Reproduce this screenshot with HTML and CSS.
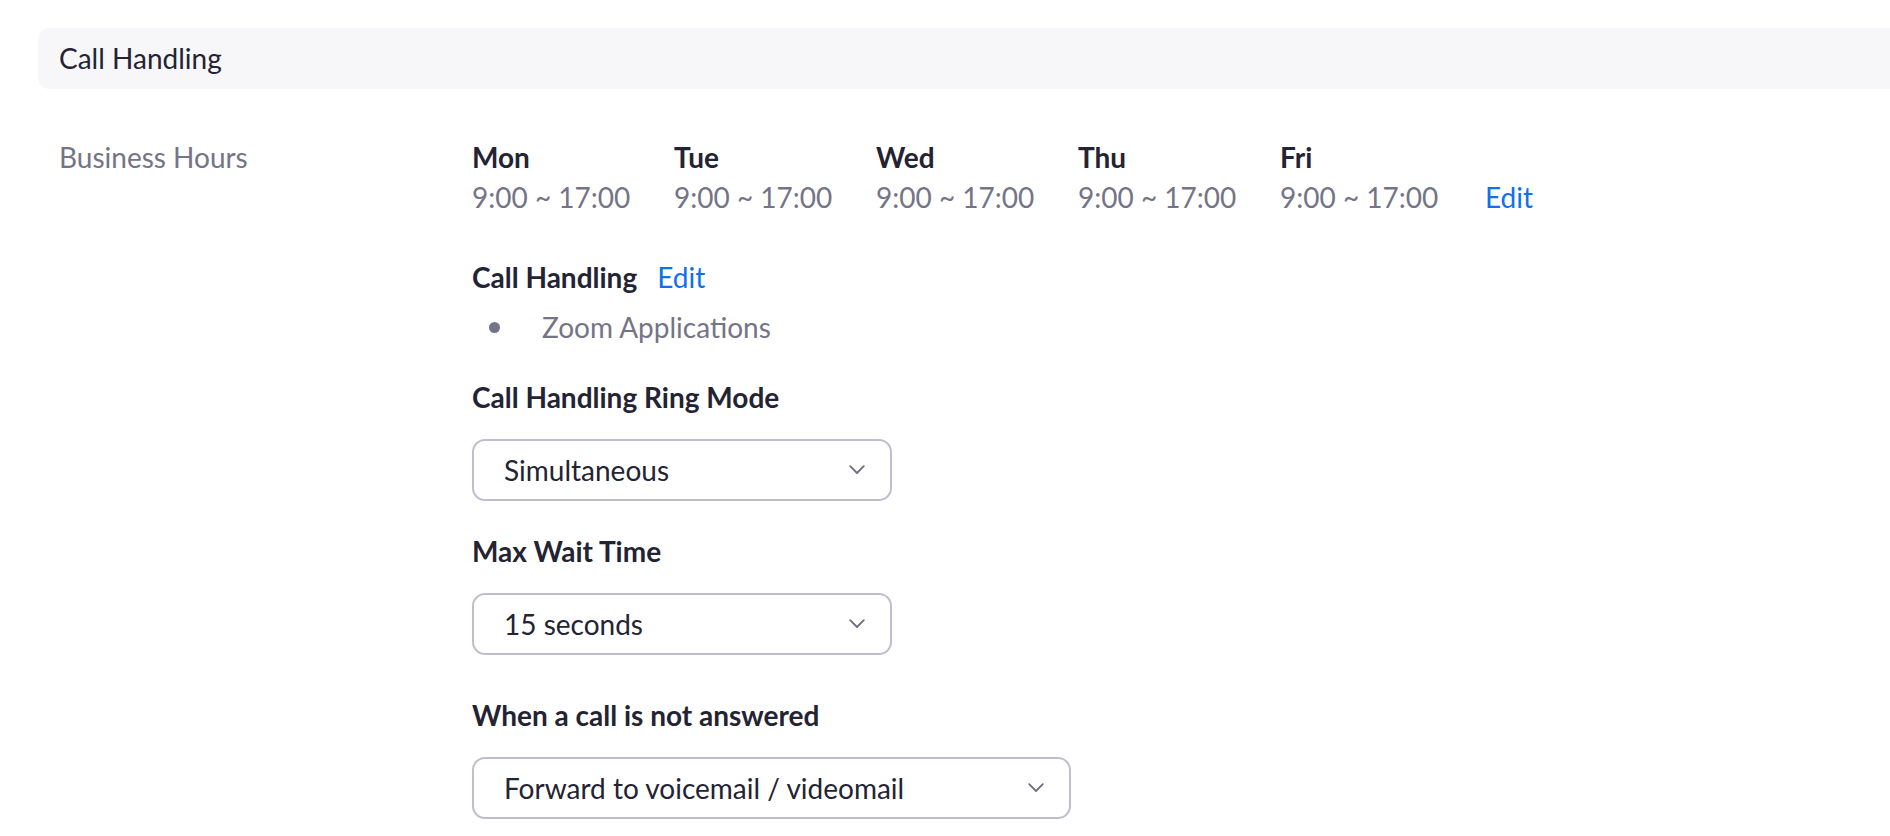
FILE: index.html
```html
<!DOCTYPE html>
<html lang="en">
<head>
<meta charset="utf-8">
<title>Call Handling</title>
<link rel="stylesheet" href="styles.css">
</head>
<body>
<div class="page">
  <div class="section-bar">Call Handling</div>

  <div class="setting-row">
    <div class="setting-label">Business Hours</div>
    <div class="setting-content">
      <div class="days">
        <div class="day">
          <div class="day-name">Mon</div>
          <div class="day-time">9:00 ~ 17:00</div>
        </div>
        <div class="day">
          <div class="day-name">Tue</div>
          <div class="day-time">9:00 ~ 17:00</div>
        </div>
        <div class="day">
          <div class="day-name">Wed</div>
          <div class="day-time">9:00 ~ 17:00</div>
        </div>
        <div class="day">
          <div class="day-name">Thu</div>
          <div class="day-time">9:00 ~ 17:00</div>
        </div>
        <div class="day">
          <div class="day-name">Fri</div>
          <div class="day-time">9:00 ~ 17:00</div>
        </div>
        <a class="link days-edit" href="#">Edit</a>
      </div>

      <div class="handling-head">
        <span class="strong">Call Handling</span>
        <a class="link" href="#">Edit</a>
      </div>
      <ul class="handling-list">
        <li>Zoom Applications</li>
      </ul>

      <div class="field-label first">Call Handling Ring Mode</div>
      <div class="select narrow">
        <span>Simultaneous</span>
        <svg class="chevron" width="16" height="10" viewBox="0 0 16 10"><path d="M1.2 1.2 L8 8 L14.8 1.2" fill="none" stroke="#6e6e80" stroke-width="1.8" stroke-linecap="round" stroke-linejoin="round"/></svg>
      </div>

      <div class="field-label second">Max Wait Time</div>
      <div class="select narrow">
        <span>15 seconds</span>
        <svg class="chevron" width="16" height="10" viewBox="0 0 16 10"><path d="M1.2 1.2 L8 8 L14.8 1.2" fill="none" stroke="#6e6e80" stroke-width="1.8" stroke-linecap="round" stroke-linejoin="round"/></svg>
      </div>

      <div class="field-label third">When a call is not answered</div>
      <div class="select wide">
        <span>Forward to voicemail / videomail</span>
        <svg class="chevron" width="16" height="10" viewBox="0 0 16 10"><path d="M1.2 1.2 L8 8 L14.8 1.2" fill="none" stroke="#6e6e80" stroke-width="1.8" stroke-linecap="round" stroke-linejoin="round"/></svg>
      </div>
    </div>
  </div>
</div>
</body>
</html>
```

FILE: styles.css
```css
* {
  box-sizing: border-box;
}

html, body {
  margin: 0;
  padding: 0;
  background: #ffffff;
  overflow: hidden;
}

body {
  font-family: Lato, "Open Sans", "Liberation Sans", sans-serif;
  font-size: 28px;
  line-height: 40px;
  color: #232333;
}

.page {
  padding: 28px 0 0 38px;
}

.section-bar {
  height: 61px;
  line-height: 61px;
  background: #f7f7fa;
  border-radius: 12px 0 0 12px;
  padding-left: 21px;
  color: #232333;
}

.setting-row {
  display: flex;
  margin-top: 48px;
}

.setting-label {
  width: 434px;
  padding-left: 21px;
  color: #747487;
}

.setting-content {
  display: flex;
  flex-direction: column;
  align-items: flex-start;
}

.days {
  display: flex;
  align-items: flex-end;
}

.day {
  width: 202px;
}

.day-name {
  font-weight: 700;
}

.day-time {
  color: #747487;
}

.link {
  color: #0e71eb;
  text-decoration: none;
}

.days-edit {
  margin-left: 3px;
}

.handling-head {
  margin-top: 40px;
  display: flex;
  gap: 20px;
}

.strong {
  font-weight: 700;
}

.handling-list {
  list-style: none;
  margin: 10px 0 0 0;
  padding: 0;
}

.handling-list li {
  display: flex;
  align-items: center;
  color: #747487;
}

.handling-list li::before {
  content: "";
  width: 11px;
  height: 11px;
  border-radius: 50%;
  background: #747487;
  margin-left: 17px;
  margin-right: 42px;
}

.field-label {
  font-weight: 700;
  margin-top: 30px;
}

.field-label.third {
  margin-top: 40px;
}

.select {
  margin-top: 22px;
  height: 62px;
  border: 2px solid #bebecf;
  border-radius: 13px;
  display: flex;
  align-items: center;
  justify-content: space-between;
  padding: 0 25px 0 30px;
  color: #232333;
}

.select.narrow {
  width: 420px;
}

.select.wide {
  width: 599px;
}

.chevron {
  display: block;
  flex: none;
}
```
